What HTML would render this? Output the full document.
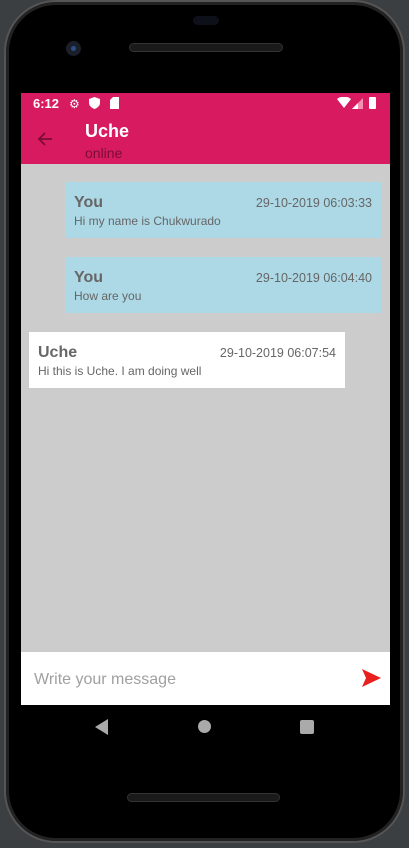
<!DOCTYPE html>
<html><head><style>
*{margin:0;padding:0;box-sizing:border-box}
body{width:409px;height:848px;background:#3c3f41;position:relative;overflow:hidden;font-family:"Liberation Sans",Roboto,sans-serif}
.phone{position:absolute;left:4px;top:0;width:401px;height:843px;background:#000;border-radius:52px;border:2px solid #555;box-shadow:inset 0 0 0 3px #222}
.abs{position:absolute}
.bub{position:absolute;height:56px;background:#add8e6;color:#666}
.bub .n{position:absolute;left:9px;top:12px;font-size:16px;font-weight:bold}
.bub .t{position:absolute;right:9px;top:14px;font-size:12.5px}
.bub .m{position:absolute;left:9px;top:32px;font-size:12px}
</style></head><body>
<div class="phone"></div>
<div class="abs" style="left:193px;top:16px;width:26px;height:9px;border-radius:5px;background:#0d1018"></div>
<div class="abs" style="left:66px;top:41px;width:15px;height:15px;border-radius:50%;background:#1a1f2a"></div>
<div class="abs" style="left:71px;top:46px;width:5px;height:5px;border-radius:50%;background:#2a4c8a"></div>
<div class="abs" style="left:129px;top:43px;width:154px;height:9px;border-radius:5px;background:#1a1a1a;border:1px solid #333"></div>
<div class="abs" style="left:21px;top:93px;width:369px;height:71px;background:#d81b60"></div>
<div class="abs" style="left:33px;top:96px;color:#fff;font-size:13px;font-weight:bold">6:12</div>
<div class="abs" style="left:69px;top:97px;color:#fff;font-size:12px">⚙</div>
<svg class="abs" style="left:89px;top:97px" width="11" height="12"><path d="M5.5 0 L11 2 V6 C11 9 8 11 5.5 12 C3 11 0 9 0 6 V2Z" fill="#fff"/></svg>
<svg class="abs" style="left:110px;top:97px" width="9" height="12"><path d="M3 0 H9 V12 H0 V3Z" fill="#fff"/></svg>
<svg class="abs" style="left:337px;top:97px" width="14" height="11"><path d="M0 2 Q7 -3 14 2 L7 11Z" fill="#fff"/></svg>
<svg class="abs" style="left:352px;top:98px" width="11" height="11"><path d="M11 0 V11 H0Z" fill="#f48fb1"/><path d="M6 5 V11 H0Z" fill="#fff"/></svg>
<div class="abs" style="left:369px;top:97px;width:7px;height:12px;background:#fff;border-radius:1px"></div>
<svg class="abs" style="left:37px;top:131px" width="16" height="16"><path d="M15 8 H2 M8 2 L2 8 L8 14" stroke="#7a0d35" stroke-width="1.8" fill="none"/></svg>
<div class="abs" style="left:85px;top:121px;color:#fff;font-size:18px;font-weight:bold">Uche</div>
<div class="abs" style="left:85px;top:145px;color:#7a0d35;font-size:14px">online</div>
<div class="abs" style="left:21px;top:164px;width:369px;height:488px;background:#cccccc"></div>
<div class="bub" style="left:65px;top:182px;width:316px"><span class="n">You</span><span class="t">29-10-2019 06:03:33</span><span class="m">Hi my name is Chukwurado</span></div>
<div class="bub" style="left:65px;top:257px;width:316px"><span class="n">You</span><span class="t">29-10-2019 06:04:40</span><span class="m">How are you</span></div>
<div class="bub" style="left:29px;top:332px;width:316px;background:#fff"><span class="n">Uche</span><span class="t">29-10-2019 06:07:54</span><span class="m">Hi this is Uche. I am doing well</span></div>
<div class="abs" style="left:21px;top:652px;width:369px;height:53px;background:#fff"></div>
<div class="abs" style="left:34px;top:671px;color:#a0a0a0;font-size:16px">Write your message</div>
<svg class="abs" style="left:362px;top:669px" width="19" height="18"><path d="M0 0 L19 9 L0 18 L4 9Z" fill="#e8201e"/></svg>
<svg class="abs" style="left:95px;top:719px" width="14" height="16"><path d="M13 0 V16 L0 8Z" fill="#aaa"/></svg>
<div class="abs" style="left:198px;top:720px;width:13px;height:13px;border-radius:50%;background:#aaa"></div>
<div class="abs" style="left:300px;top:720px;width:14px;height:14px;border-radius:2px;background:#aaa"></div>
<div class="abs" style="left:127px;top:793px;width:153px;height:9px;border-radius:5px;background:#1a1a1a;border:1px solid #333"></div>
</body></html>
